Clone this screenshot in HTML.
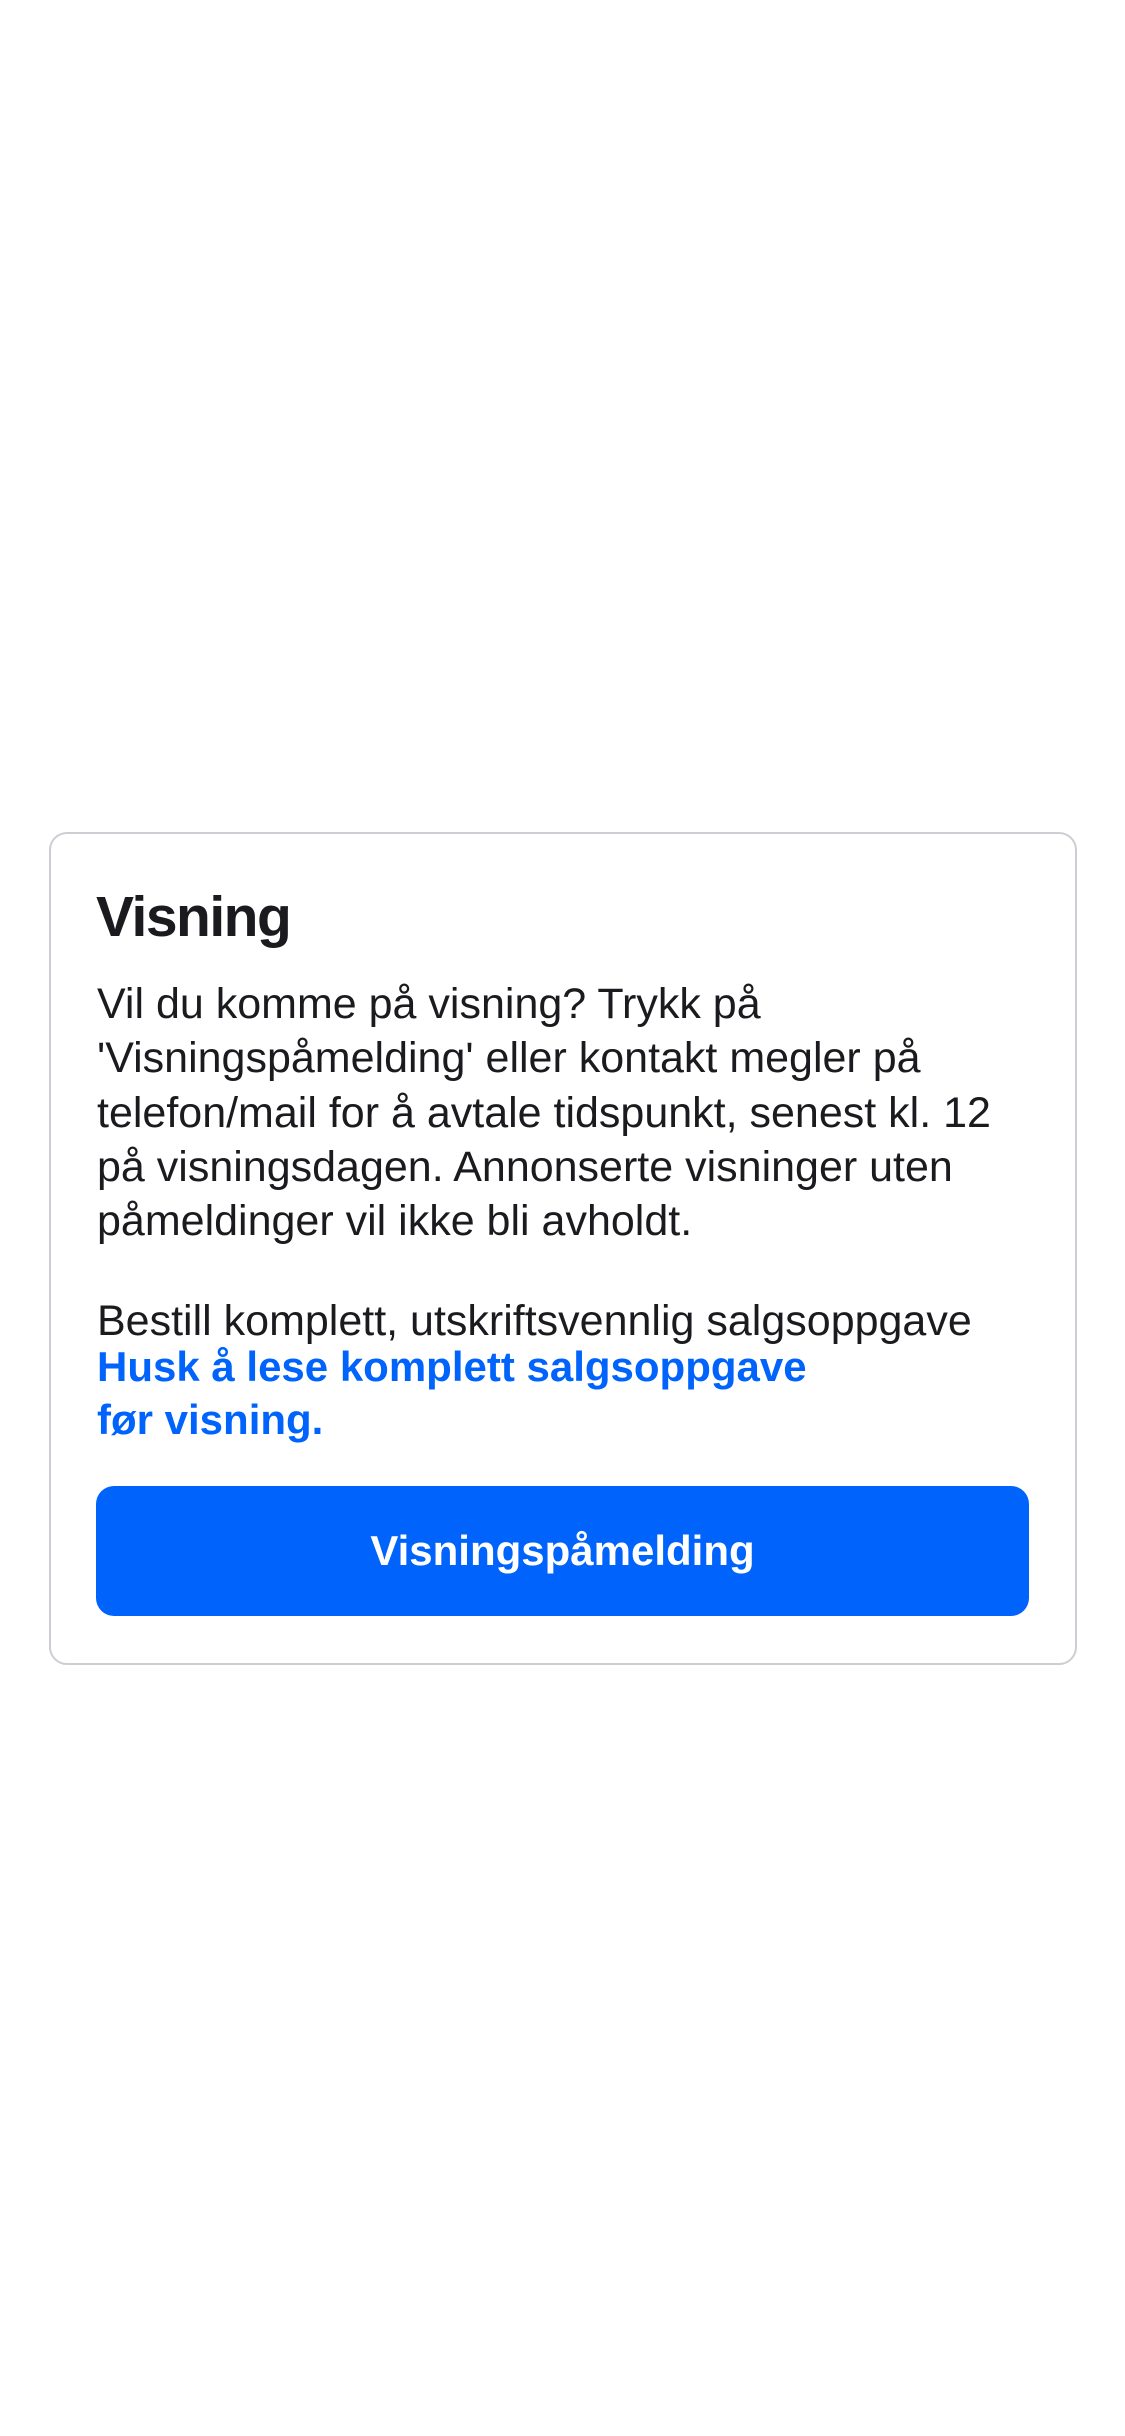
<!DOCTYPE html>
<html><head><meta charset="utf-8"><style>
html,body{margin:0;padding:0;background:#fff;}
body{width:1125px;height:2436px;position:relative;overflow:hidden;font-family:"Liberation Sans",sans-serif;color:#1b1b1f;}
.card{position:absolute;left:49px;top:832px;width:1028px;height:833px;border:2px solid #cdcdd3;border-radius:18px;box-sizing:border-box;}
.l{position:absolute;left:97px;white-space:nowrap;font-size:43px;line-height:54px;letter-spacing:0;}
.t{position:absolute;left:96px;top:889px;font-size:57px;line-height:56px;font-weight:bold;letter-spacing:-1.5px;}
.b{color:#0063fb;font-weight:bold;line-height:50px;font-size:42px;letter-spacing:0;}
.btn{position:absolute;left:96px;top:1486px;width:933px;height:130px;background:#0063fb;border-radius:18px;color:#fff;font-weight:bold;font-size:42px;line-height:130px;text-align:center;}
</style></head><body>
<div class="card"></div>
<div class="t">Visning</div>
<div class="l" style="top:977px">Vil du komme på visning? Trykk på</div>
<div class="l" style="top:1031px">'Visningspåmelding' eller kontakt megler på</div>
<div class="l" style="top:1086px">telefon/mail for å avtale tidspunkt, senest kl. 12</div>
<div class="l" style="top:1140px">på visningsdagen. Annonserte visninger uten</div>
<div class="l" style="top:1194px">påmeldinger vil ikke bli avholdt.</div>
<div class="l" style="top:1294px">Bestill komplett, utskriftsvennlig salgsoppgave</div>
<div class="l b" style="top:1342px">Husk å lese komplett salgsoppgave</div>
<div class="l b" style="top:1395px">før visning.</div>
<div class="btn">Visningspåmelding</div>
</body></html>
